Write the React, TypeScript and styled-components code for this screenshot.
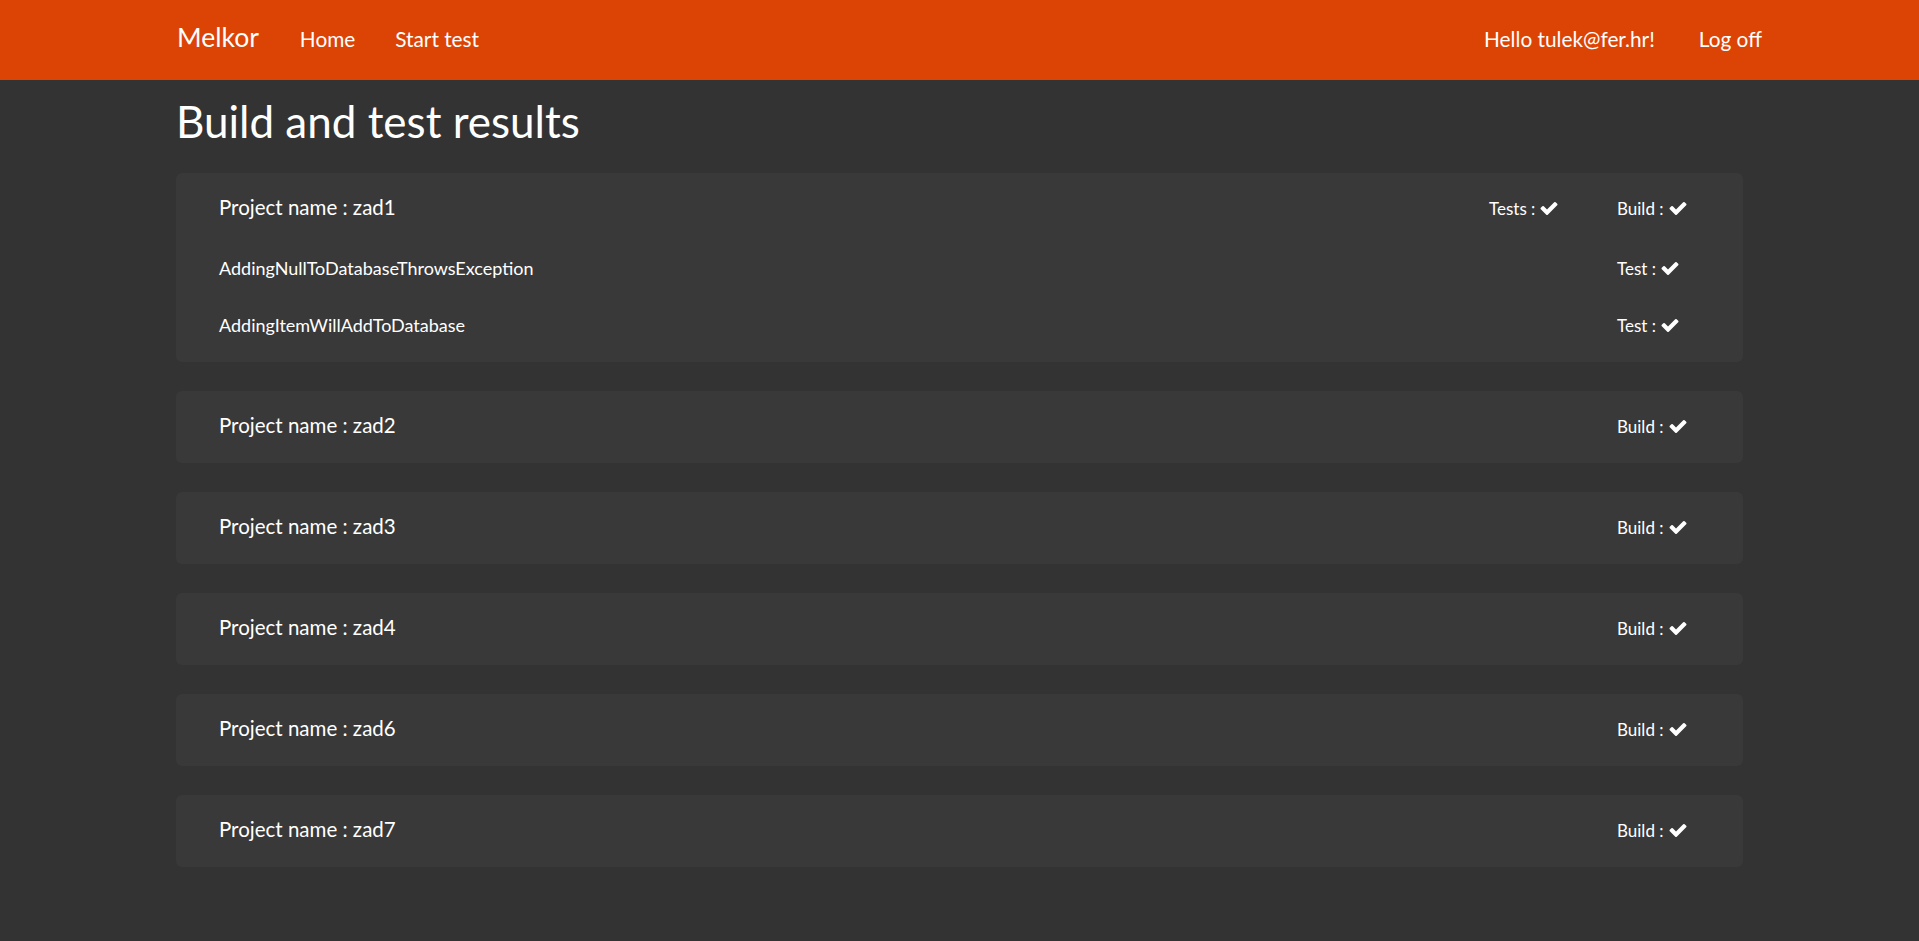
import React from "react";
import styled, { createGlobalStyle } from "styled-components";

const GlobalStyle = createGlobalStyle`
  html, body {
    margin: 0;
    padding: 0;
    background: #333333;
    color: #ffffff;
    font-family: Lato, "Open Sans", "Liberation Sans", sans-serif;
  }
  * { box-sizing: border-box; }
`;

const Navbar = styled.header`
  height: 80px;
  background: #dc4405;
  display: flex;
  align-items: baseline;
  padding: 22px 157px 0 177px;
`;

const Brand = styled.a`
  font-size: 26.5px;
  line-height: 31px;
  color: #fff;
  text-decoration: none;
  margin-right: 41px;
`;

const NavLink = styled.a<{ $gap?: number }>`
  font-size: 20.8px;
  line-height: 25px;
  color: #fff;
  text-decoration: none;
  margin-right: ${(p) => p.$gap ?? 0}px;
`;

const Spacer = styled.div`
  flex: 1;
`;

const Container = styled.main`
  width: 1567px;
  margin: 0 auto 0 176px;
`;

const Title = styled.h1`
  font-size: 44px;
  line-height: 47px;
  font-weight: 400;
  margin: 18px 0 28px 0;
`;

const Card = styled.section`
  background: #393939;
  border-radius: 6px;
  padding: 21px 0 24px 43px;
  margin-bottom: 29px;
`;

const Row = styled.div<{ $test?: boolean }>`
  display: grid;
  grid-template-columns: 1fr 128px 126px;
  align-items: baseline;
  font-size: ${(p) => (p.$test ? 18 : 20.5)}px;
  line-height: ${(p) => (p.$test ? 20 : 27)}px;
  margin-top: ${(p) => (p.$test ? 36.5 : 0)}px;
`;

const Label = styled.span`
  font-size: 17px;
  line-height: 20px;
  white-space: nowrap;
`;

const TestList = styled.div`
  padding-bottom: 2px;
`;

const CheckSvg = styled.svg`
  width: 18px;
  height: 13px;
  margin-left: 5px;
  fill: #fff;
`;

const Check = () => (
  <CheckSvg viewBox="121 334 1550 1188">
    <path d="M1671 566q0 40-28 68l-724 724-136 136q-28 28-68 28t-68-28l-136-136-362-362q-28-28-28-68t28-68l136-136q28-28 68-28t68 28l294 295 656-657q28-28 68-28t68 28l136 136q28 28 28 68z" />
  </CheckSvg>
);

type Project = { name: string; tests?: string[] };

const projects: Project[] = [
  {
    name: "zad1",
    tests: ["AddingNullToDatabaseThrowsException", "AddingItemWillAddToDatabase"],
  },
  { name: "zad2" },
  { name: "zad3" },
  { name: "zad4" },
  { name: "zad6" },
  { name: "zad7" },
];

export default function App() {
  return (
    <>
      <GlobalStyle />
      <Navbar>
        <Brand href="#">Melkor</Brand>
        <NavLink href="#" $gap={40}>Home</NavLink>
        <NavLink href="#">Start test</NavLink>
        <Spacer />
        <NavLink href="#" $gap={44}>Hello tulek@fer.hr!</NavLink>
        <NavLink href="#">Log off</NavLink>
      </Navbar>
      <Container>
        <Title>Build and test results</Title>
        {projects.map((p) => (
          <Card key={p.name}>
            <Row>
              <span>Project name : {p.name}</span>
              <span>
                {p.tests && (
                  <Label>
                    Tests :<Check />
                  </Label>
                )}
              </span>
              <Label>
                Build :<Check />
              </Label>
            </Row>
            {p.tests && (
              <TestList>
                {p.tests.map((t) => (
                  <Row $test key={t}>
                    <span>{t}</span>
                    <span />
                    <Label>
                      Test :<Check />
                    </Label>
                  </Row>
                ))}
              </TestList>
            )}
          </Card>
        ))}
      </Container>
    </>
  );
}
